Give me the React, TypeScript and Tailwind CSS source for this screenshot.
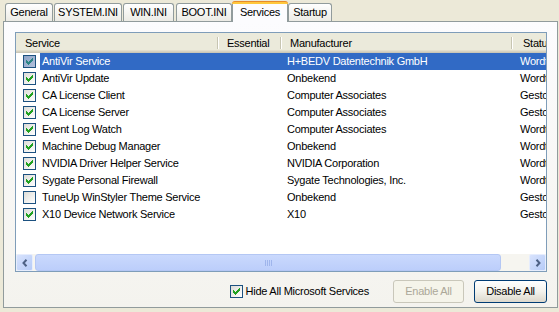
import React from "react";

type Service = {
  name: string;
  manufacturer: string;
  status: string;
  checked: boolean;
};

const services: Service[] = [
  { name: "AntiVir Service", manufacturer: "H+BEDV Datentechnik GmbH", status: "Wordt uitgevoerd", checked: true },
  { name: "AntiVir Update", manufacturer: "Onbekend", status: "Wordt uitgevoerd", checked: true },
  { name: "CA License Client", manufacturer: "Computer Associates", status: "Gestopt", checked: true },
  { name: "CA License Server", manufacturer: "Computer Associates", status: "Gestopt", checked: true },
  { name: "Event Log Watch", manufacturer: "Computer Associates", status: "Wordt uitgevoerd", checked: true },
  { name: "Machine Debug Manager", manufacturer: "Onbekend", status: "Wordt uitgevoerd", checked: true },
  { name: "NVIDIA Driver Helper Service", manufacturer: "NVIDIA Corporation", status: "Wordt uitgevoerd", checked: true },
  { name: "Sygate Personal Firewall", manufacturer: "Sygate Technologies, Inc.", status: "Wordt uitgevoerd", checked: true },
  { name: "TuneUp WinStyler Theme Service", manufacturer: "Onbekend", status: "Gestopt", checked: false },
  { name: "X10 Device Network Service", manufacturer: "X10", status: "Gestopt", checked: true },
];

const tabs = [
  { label: "General", cls: "w-[48px] ml-0" },
  { label: "SYSTEM.INI", cls: "w-[68px] ml-[1px]" },
  { label: "WIN.INI", cls: "w-[51px] ml-[1px]" },
  { label: "BOOT.INI", cls: "w-[56px] ml-[2px]" },
  { label: "Services", cls: "w-[56px]", active: true },
  { label: "Startup", cls: "w-[44px]" },
];

function Check({ color = "#21a121" }: { color?: string }) {
  return (
    <svg width="7" height="7" viewBox="0 0 7 7" shapeRendering="crispEdges">
      <path d="M0 2 L2 4 L6 0 L7 0 L7 2 L2 7 L0 5 Z" fill={color} />
    </svg>
  );
}

function Checkbox({ checked, selected }: { checked: boolean; selected?: boolean }) {
  return (
    <div
      className={`w-[13px] h-[13px] shrink-0 border border-[#1c5180] flex items-center justify-center ${
        selected ? "bg-linear-to-br from-[#8ea3c7] to-[#b3c2dc]" : "bg-linear-to-br from-[#dcdcd7] to-white"
      }`}
    >
      {checked && <Check color={selected ? "#2b8585" : "#21a121"} />}
    </div>
  );
}

function HeaderCell({ label, cls, divider = true }: { label: string; cls: string; divider?: boolean }) {
  return (
    <div className={`relative h-full flex items-center whitespace-nowrap shrink-0 overflow-hidden ${cls}`}>
      {label}
      {divider && (
        <div className="absolute right-0 top-[4px] h-[12px] flex">
          <div className="w-px bg-[#c7c5b2]" />
          <div className="w-px bg-white" />
        </div>
      )}
    </div>
  );
}

function ScrollButton({ dir }: { dir: "left" | "right" }) {
  return (
    <div className="w-[17px] h-[17px] shrink-0 rounded-[2px] border border-[#e6edfd] bg-linear-to-br from-[#d8e3fd] to-[#b6cbf7] flex items-center justify-center">
      <svg width="6" height="8" viewBox="0 0 6 8">
        {dir === "left" ? (
          <path d="M4.5 0.8 L1.5 4 L4.5 7.2" stroke="#4d6185" strokeWidth="2" fill="none" />
        ) : (
          <path d="M1.5 0.8 L4.5 4 L1.5 7.2" stroke="#4d6185" strokeWidth="2" fill="none" />
        )}
      </svg>
    </div>
  );
}

export default function App() {
  return (
    <div className="w-[559px] h-[312px] bg-[#ece9d8] pt-[1px] overflow-hidden text-[11px] tracking-[-0.25px] text-black font-['Liberation_Sans',Arial,sans-serif]">
      {/* Tabs */}
      <div className="flex items-end h-[20px] pl-[5px]">
        {tabs.map((t) =>
          t.active ? (
            <div key={t.label} className={`relative z-10 -mb-px h-[21px] flex flex-col shrink-0 ${t.cls}`}>
              <div className="h-[3px] rounded-t-[3px] border-t border-[#e68b2c] bg-[#ffc83c]" />
              <div className="flex-1 border-x border-[#919b9c] bg-[#fcfcfe] flex items-center justify-center pb-[1px]">
                {t.label}
              </div>
            </div>
          ) : (
            <div
              key={t.label}
              className={`h-[18px] shrink-0 rounded-t-[3px] border-x border-t border-[#919b9c] bg-linear-to-b from-white to-[#ecebe5] flex items-center justify-center ${t.cls}`}
            >
              {t.label}
            </div>
          )
        )}
      </div>

      {/* Panel */}
      <div className="ml-[3px] w-[555px] h-[287px] border border-[#919b9c] bg-linear-to-b from-[#fcfcfe] to-[#f4f3ee] pt-[10px] pl-[11px] pr-[10px] flex flex-col">
        {/* List */}
        <div className="w-[532px] h-[240px] border border-[#7f9db9] bg-white flex flex-col overflow-hidden">
          <div className="h-[20px] shrink-0 flex bg-[#ebeadb] shadow-[inset_0_-1px_0_#cbc7b8,inset_0_-2px_0_#d6d2c2,inset_0_-3px_0_#e2decd]">
            <HeaderCell label="Service" cls="w-[203px] pl-[9px]" />
            <HeaderCell label="Essential" cls="w-[63px] pl-[8px]" />
            <HeaderCell label="Manufacturer" cls="w-[231px] pl-[8px]" />
            <HeaderCell label="Status" cls="flex-1 pl-[10px]" divider={false} />
          </div>

          <div className="flex-1 flex flex-col">
            {services.map((s, i) => {
              const sel = i === 0;
              return (
                <div key={s.name} className="h-[17px] flex shrink-0">
                  <div className="w-[24px] shrink-0 pl-[7px] flex items-center">
                    <Checkbox checked={s.checked} selected={sel} />
                  </div>
                  <div className={`flex-1 min-w-0 flex items-center whitespace-nowrap ${sel ? "bg-[#316ac5] text-white" : ""}`}>
                    <div className="w-[178px] shrink-0 pl-[2px]">{s.name}</div>
                    <div className="w-[64px] shrink-0" />
                    <div className="w-[231px] shrink-0 pl-[5px]">{s.manufacturer}</div>
                    <div className="flex-1 min-w-0 overflow-hidden pl-[7px]">{s.status}</div>
                  </div>
                </div>
              );
            })}
          </div>

          {/* Horizontal scrollbar */}
          <div className="h-[17px] shrink-0 flex items-center bg-[#f6f5f0]">
            <ScrollButton dir="left" />
            <div className="flex-1 h-full px-[1px] flex items-center">
              <div className="ml-[1px] w-[466px] h-[17px] rounded-[3px] border border-[#b4c7f4] bg-linear-to-b from-[#cad9fd] to-[#bccefb] flex items-center justify-center gap-[1px]">
                {[0, 1, 2, 3].map((n) => (
                  <div key={n} className="w-[1px] h-[6px] bg-[#eef3fe] border-r border-[#9fb5ec]" />
                ))}
              </div>
            </div>
            <ScrollButton dir="right" />
          </div>
        </div>

        {/* Bottom row */}
        <div className="mt-[8px] h-[23px] flex items-center justify-end">
          <label className="flex items-center gap-[2px] mr-[24px]">
            <Checkbox checked />
            <span className="pl-[1px]">Hide All Microsoft Services</span>
          </label>
          <button className="w-[71px] h-[23px] rounded-[3px] border border-[#c9c7ba] bg-[#f5f4ea] text-[#aca899] mr-[10px]">
            Enable All
          </button>
          <button className="w-[73px] h-[23px] rounded-[3px] border border-[#003c74] bg-linear-to-b from-white via-[#f3f2ec] to-[#dcd8cc]">
            Disable All
          </button>
        </div>
      </div>
    </div>
  );
}
